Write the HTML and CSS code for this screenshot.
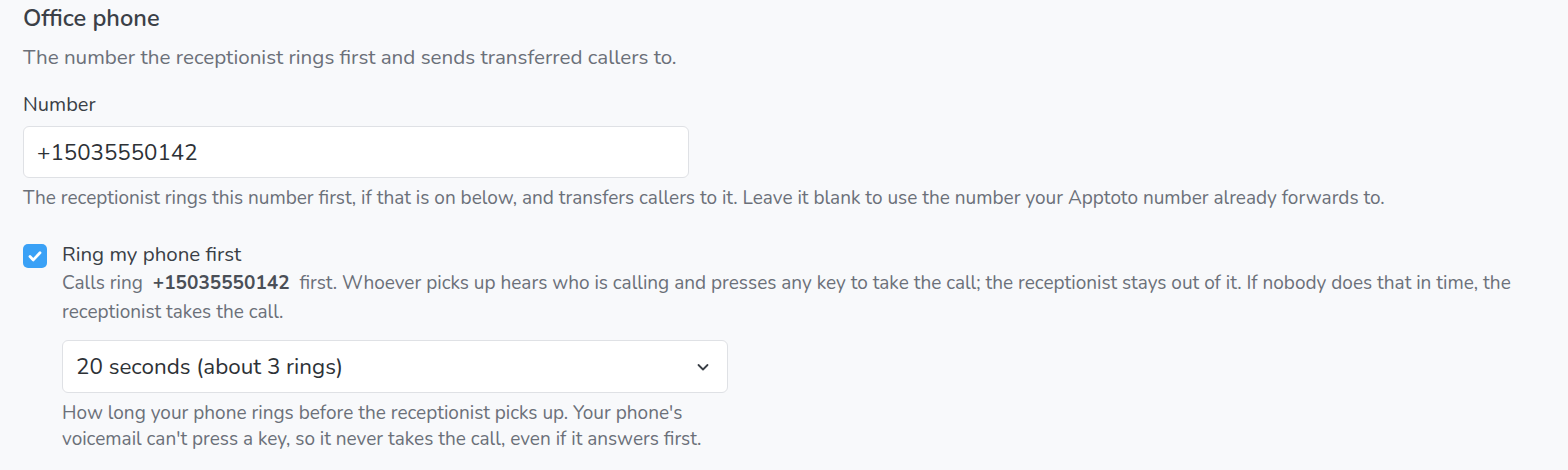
FILE: index.html
```html
<!DOCTYPE html>
<html lang="en">
<head>
<meta charset="utf-8">
<title>Office phone</title>
<link rel="stylesheet" href="styles.css">
</head>
<body>
<section class="panel">
  <h2 class="title">Office phone</h2>
  <p class="desc">The number the receptionist rings first and sends transferred callers to.</p>

  <div class="field">
    <label class="label" for="num">Number</label>
    <div class="input">+15035550142</div>
    <p class="help">The receptionist rings this number first, if that is on below, and transfers callers to it. Leave it blank to use the number your Apptoto number already forwards to.</p>
  </div>

  <div class="check-row">
    <span class="checkbox">
      <svg viewBox="0 0 24 24" width="24" height="24"><path d="M7 12.6l3.3 3.3L17 8.8" fill="none" stroke="#fff" stroke-width="2.8" stroke-linecap="round" stroke-linejoin="round"/></svg>
    </span>
    <div class="check-body">
      <div class="check-label">Ring my phone first</div>
      <p class="check-desc">Calls ring <strong class="num">+15035550142</strong> first. Whoever picks up hears who is calling and presses any key to take the call; the receptionist stays out of it. If nobody does that in time, the receptionist takes the call.</p>
      <div class="select">
        <span>20 seconds (about 3 rings)</span>
        <svg class="chev" viewBox="0 0 16 16" width="16" height="16"><path d="M3.5 6l4.5 4.5L12.5 6" fill="none" stroke="#3a3f46" stroke-width="1.8" stroke-linecap="round" stroke-linejoin="round"/></svg>
      </div>
      <p class="help narrow">How long your phone rings before the receptionist picks up. Your phone's voicemail can't press a key, so it never takes the call, even if it answers first.</p>
    </div>
  </div>
</section>
</body>
</html>
```

FILE: styles.css
```css
html, body {
  margin: 0;
  padding: 0;
  background: #f8f9fb;
}
body {
  font-family: "Nunito", "Lato", "Noto Sans", sans-serif;
  color: #3a3f46;
}
.panel {
  padding: 4px 23px 0 23px;
}
.title {
  margin: 0;
  font-size: 23.6px;
  font-weight: 600;
  line-height: 28px;
  color: #3b4047;
}
.desc {
  margin: 12px 0 0 0;
  font-size: 20.6px;
  line-height: 26px;
  color: #6b7079;
}
.field {
  margin-top: 22px;
}
.label {
  display: block;
  font-size: 20px;
  line-height: 26px;
  color: #3a3f46;
}
.input {
  box-sizing: border-box;
  width: 666px;
  height: 52px;
  margin-top: 8px;
  padding: 0 13px;
  display: flex;
  align-items: center;
  background: #fff;
  border: 1px solid #dfe1e5;
  border-radius: 6px;
  font-size: 22.3px;
  color: #2d3136;
}
.help {
  margin: 7px 0 0 0;
  font-size: 19px;
  line-height: 26px;
  color: #6b7079;
}
.help.narrow {
  max-width: 665px;
  margin-top: 7px;
}
.check-row {
  display: flex;
  gap: 15px;
  margin-top: 30px;
}
.checkbox {
  flex: none;
  width: 24px;
  height: 24px;
  margin-top: 3px;
  border-radius: 5px;
  background: #3aa1f6;
  display: flex;
}
.check-body {
  flex: 1;
}
.check-label {
  font-size: 20.5px;
  line-height: 26px;
  color: #3a3f46;
}
.check-desc {
  margin: 2px 0 0 0;
  font-size: 19px;
  line-height: 29px;
  color: #6b7079;
}
.num {
  font-weight: 700;
  color: #4a4f57;
  margin: 0 5px;
}
.select {
  box-sizing: border-box;
  width: 666px;
  height: 53px;
  margin-top: 13px;
  padding: 0 16px 0 13px;
  display: flex;
  align-items: center;
  justify-content: space-between;
  background: #fff;
  border: 1px solid #dfe1e5;
  border-radius: 6px;
  font-size: 22.4px;
  color: #2d3136;
}
.chev {
  flex: none;
}
```
